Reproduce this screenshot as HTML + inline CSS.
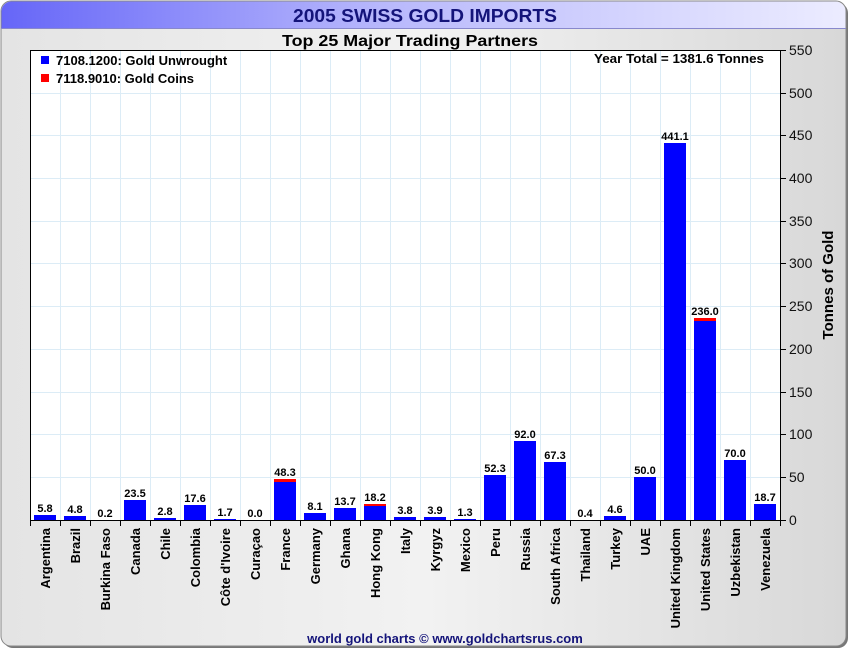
<!DOCTYPE html>
<html><head><meta charset="utf-8"><style>body{margin:0;width:850px;height:650px;overflow:hidden;background:#fff}</style></head><body>
<svg width="850" height="650" xmlns="http://www.w3.org/2000/svg" font-family="Liberation Sans, sans-serif">
<defs>
<linearGradient id="bg" x1="0" x2="1" y1="0" y2="0"><stop offset="0" stop-color="#e4e4e4"/><stop offset="0.5" stop-color="#f2f2f2"/><stop offset="1" stop-color="#d8d8d8"/></linearGradient>
<linearGradient id="tb" x1="0" x2="1"><stop offset="0" stop-color="#6666f8"/><stop offset="0.45" stop-color="#b8b8fc"/><stop offset="1" stop-color="#ececff"/></linearGradient>
</defs>
<rect x="3" y="3" width="845" height="645" rx="10" fill="#777"/>
<rect x="1" y="1" width="845" height="645" rx="10" fill="url(#bg)" stroke="#888" stroke-width="1"/>
<path d="M1.5 28 V11 A10 10 0 0 1 11 1.5 H836 A10 10 0 0 1 845.5 11 V28 Z" fill="url(#tb)"/>
<line x1="1" y1="28.5" x2="846" y2="28.5" stroke="#8888cc"/>
<text x="293" y="22" textLength="264" lengthAdjust="spacingAndGlyphs" font-size="18" font-weight="bold" fill="#14147a">2005 SWISS GOLD IMPORTS</text>
<text x="282" y="46" textLength="256" lengthAdjust="spacingAndGlyphs" font-size="16" font-weight="bold" fill="#000">Top 25 Major Trading Partners</text>
<rect x="30.5" y="50.5" width="750" height="470" fill="#fff" stroke="#000"/>
<g stroke="#dcecf6" stroke-width="1">
<path d="M60.5 51V520M90.5 51V520M120.5 51V520M150.5 51V520M180.5 51V520M210.5 51V520M240.5 51V520M270.5 51V520M300.5 51V520M330.5 51V520M360.5 51V520M390.5 51V520M420.5 51V520M450.5 51V520M480.5 51V520M510.5 51V520M540.5 51V520M570.5 51V520M600.5 51V520M630.5 51V520M660.5 51V520M690.5 51V520M720.5 51V520M750.5 51V520"/>
<path d="M31 477.5H780M31 434.5H780M31 392.5H780M31 349.5H780M31 306.5H780M31 263.5H780M31 221.5H780M31 178.5H780M31 135.5H780M31 93.5H780"/>
</g>
<g stroke="#000">
<line x1="780.5" y1="50" x2="780.5" y2="521"/>
<path d="M780 520.5H786M780 477.5H786M780 434.5H786M780 392.5H786M780 349.5H786M780 306.5H786M780 263.5H786M780 221.5H786M780 178.5H786M780 135.5H786M780 93.5H786M780 50.5H786"/>
<path d="M30 520.5H781M30.5 520V526M60.5 520V526M90.5 520V526M120.5 520V526M150.5 520V526M180.5 520V526M210.5 520V526M240.5 520V526M270.5 520V526M300.5 520V526M330.5 520V526M360.5 520V526M390.5 520V526M420.5 520V526M450.5 520V526M480.5 520V526M510.5 520V526M540.5 520V526M570.5 520V526M600.5 520V526M630.5 520V526M660.5 520V526M690.5 520V526M720.5 520V526M750.5 520V526M780.5 520V526"/>
</g>
<g font-size="14" fill="#111">
<text x="789" y="525">0</text><text x="789" y="482">50</text><text x="789" y="439">100</text><text x="789" y="397">150</text><text x="789" y="354">200</text><text x="789" y="311">250</text><text x="789" y="268">300</text><text x="789" y="226">350</text><text x="789" y="183">400</text><text x="789" y="140">450</text><text x="789" y="98">500</text><text x="789" y="55">550</text>
</g>
<text transform="translate(833,285) rotate(-90)" text-anchor="middle" font-size="15" font-weight="bold">Tonnes of Gold</text>
<rect x="41" y="56" width="8" height="8" fill="#00f"/><text x="56" y="65" font-size="13" font-weight="bold">7108.1200: Gold Unwrought</text>
<rect x="41" y="74" width="8" height="8" fill="#f00"/><text x="56" y="83" font-size="13" font-weight="bold">7118.9010: Gold Coins</text>
<text x="594" y="63" textLength="170" lengthAdjust="spacingAndGlyphs" font-size="13" font-weight="bold">Year Total = 1381.6 Tonnes</text>
<g fill="#00f">
<rect x="34" y="515" width="22" height="5"/><rect x="64" y="516" width="22" height="4"/><rect x="124" y="500" width="22" height="20"/><rect x="154" y="518" width="22" height="2"/><rect x="184" y="505" width="22" height="15"/><rect x="214" y="519" width="22" height="1"/><rect x="274" y="479" width="22" height="41"/><rect x="304" y="513" width="22" height="7"/><rect x="334" y="508" width="22" height="12"/><rect x="364" y="504" width="22" height="16"/><rect x="394" y="517" width="22" height="3"/><rect x="424" y="517" width="22" height="3"/><rect x="454" y="519" width="22" height="1"/><rect x="484" y="475" width="22" height="45"/><rect x="514" y="441" width="22" height="79"/><rect x="544" y="462" width="22" height="58"/><rect x="604" y="516" width="22" height="4"/><rect x="634" y="477" width="22" height="43"/><rect x="664" y="143" width="22" height="377"/><rect x="694" y="318" width="22" height="202"/><rect x="724" y="460" width="22" height="60"/><rect x="754" y="504" width="22" height="16"/>
</g>
<g fill="#f00"><rect x="274" y="479" width="22" height="3"/><rect x="364" y="504" width="22" height="2"/><rect x="694" y="318" width="22" height="3"/></g>
<g font-size="11" font-weight="bold" text-anchor="middle" fill="#000">
<text x="45" y="512">5.8</text><text x="75" y="513">4.8</text><text x="105" y="517">0.2</text><text x="135" y="497">23.5</text><text x="165" y="515">2.8</text><text x="195" y="502">17.6</text><text x="225" y="516">1.7</text><text x="255" y="517">0.0</text><text x="285" y="476">48.3</text><text x="315" y="510">8.1</text><text x="345" y="505">13.7</text><text x="375" y="501">18.2</text><text x="405" y="514">3.8</text><text x="435" y="514">3.9</text><text x="465" y="516">1.3</text><text x="495" y="472">52.3</text><text x="525" y="438">92.0</text><text x="555" y="459">67.3</text><text x="585" y="517">0.4</text><text x="615" y="513">4.6</text><text x="645" y="474">50.0</text><text x="675" y="140">441.1</text><text x="705" y="315">236.0</text><text x="735" y="457">70.0</text><text x="765" y="501">18.7</text>
</g>
<g font-size="13" font-weight="bold" text-anchor="end" fill="#000">
<text transform="translate(50,528) rotate(-90)">Argentina</text><text transform="translate(80,528) rotate(-90)">Brazil</text><text transform="translate(110,528) rotate(-90)">Burkina Faso</text><text transform="translate(140,528) rotate(-90)">Canada</text><text transform="translate(170,528) rotate(-90)">Chile</text><text transform="translate(200,528) rotate(-90)">Colombia</text><text transform="translate(230,528) rotate(-90)">Côte d'Ivoire</text><text transform="translate(260,528) rotate(-90)">Curaçao</text><text transform="translate(290,528) rotate(-90)">France</text><text transform="translate(320,528) rotate(-90)">Germany</text><text transform="translate(350,528) rotate(-90)">Ghana</text><text transform="translate(380,528) rotate(-90)">Hong Kong</text><text transform="translate(410,528) rotate(-90)">Italy</text><text transform="translate(440,528) rotate(-90)">Kyrgyz</text><text transform="translate(470,528) rotate(-90)">Mexico</text><text transform="translate(500,528) rotate(-90)">Peru</text><text transform="translate(530,528) rotate(-90)">Russia</text><text transform="translate(560,528) rotate(-90)">South Africa</text><text transform="translate(590,528) rotate(-90)">Thailand</text><text transform="translate(620,528) rotate(-90)">Turkey</text><text transform="translate(650,528) rotate(-90)">UAE</text><text transform="translate(680,528) rotate(-90)">United Kingdom</text><text transform="translate(710,528) rotate(-90)">United States</text><text transform="translate(740,528) rotate(-90)">Uzbekistan</text><text transform="translate(770,528) rotate(-90)">Venezuela</text>
</g>
<text x="445" y="643" text-anchor="middle" font-size="13" font-weight="bold" fill="#14147a">world gold charts © www.goldchartsrus.com</text>
</svg>
</body></html>
